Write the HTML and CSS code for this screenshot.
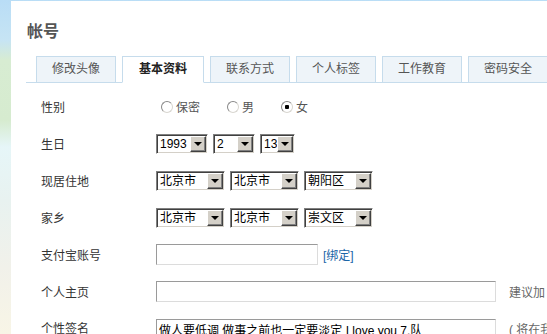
FILE: index.html
```html
<!DOCTYPE html>
<html lang="zh-CN">
<head>
    <meta charset="UTF-8">
    <meta name="viewport" content="width=device-width, initial-scale=1.0">
    <title>帐号 - 基本资料</title>
    <link rel="stylesheet" href="styles.css">
</head>
<body>

<!-- Panel principal -->
<div class="panel">
    <h2 class="title">帐号</h2>

    <!-- Pestañas -->
    <ul class="tabs">
        <li class="tab">修改头像</li>
        <li class="tab active">基本资料</li>
        <li class="tab">联系方式</li>
        <li class="tab">个人标签</li>
        <li class="tab">工作教育</li>
        <li class="tab">密码安全</li>
    </ul>

    <!-- Formulario -->
    <form class="profile">
        <div class="row">
            <label class="label">性别</label>
            <div class="controls">
                <label class="choice"><input type="radio" name="sex" class="radio">保密</label>
                <label class="choice"><input type="radio" name="sex" class="radio">男</label>
                <label class="choice"><input type="radio" name="sex" class="radio" checked>女</label>
            </div>
        </div>

        <div class="row">
            <label class="label">生日</label>
            <div class="controls">
                <span class="dropdown w-year"><select><option>1993</option></select><span class="arrow"></span></span>
                <span class="dropdown w-month"><select><option>2</option></select><span class="arrow"></span></span>
                <span class="dropdown w-day"><select><option>13</option></select><span class="arrow"></span></span>
            </div>
        </div>

        <div class="row">
            <label class="label">现居住地</label>
            <div class="controls">
                <span class="dropdown w-city"><select><option>北京市</option></select><span class="arrow"></span></span>
                <span class="dropdown w-city"><select><option>北京市</option></select><span class="arrow"></span></span>
                <span class="dropdown w-city"><select><option>朝阳区</option></select><span class="arrow"></span></span>
            </div>
        </div>

        <div class="row">
            <label class="label">家乡</label>
            <div class="controls">
                <span class="dropdown w-city"><select><option>北京市</option></select><span class="arrow"></span></span>
                <span class="dropdown w-city"><select><option>北京市</option></select><span class="arrow"></span></span>
                <span class="dropdown w-city"><select><option>崇文区</option></select><span class="arrow"></span></span>
            </div>
        </div>

        <div class="row">
            <label class="label">支付宝账号</label>
            <div class="controls">
                <input type="text" class="text short">
                <a class="bind-link">[绑定]</a>
            </div>
        </div>

        <div class="row">
            <label class="label">个人主页</label>
            <div class="controls">
                <input type="text" class="text long">
                <span class="hint">建议加</span>
            </div>
        </div>

        <div class="row top">
            <label class="label">个性签名</label>
            <div class="controls">
                <textarea class="text long sign">做人要低调 做事之前也一定要淡定 I love you 7.队</textarea>
                <span class="hint">( 将在我</span>
            </div>
        </div>
    </form>
</div>

</body>
</html>
```

FILE: styles.css
```css
body, html {
    height: 100%;
    margin: 0;
    overflow: hidden;
    font-family: "Liberation Sans", "Noto Sans CJK SC", sans-serif;
    font-size: 12px;
}

/* Fondo degradado que asoma a la izquierda */
body {
    background: linear-gradient(#b9ddf6 0%, #c6e4f4 12%, #d7ecd2 18%, #d6ebcf 36%, #e6f6f8 44%, #e8f2f0 60%, #f1f1ea 80%, #f8f5e6 100%);
}

.panel {
    margin: 1px 0 0 11px;
    height: 100%;
    background: #fff;
    padding: 19px 0 0 15px;
    white-space: nowrap;
}

.title {
    margin: 0 0 16px 1px;
    font-size: 16px;
    line-height: 20px;
    font-family: "Noto Sans CJK SC", sans-serif;
    font-weight: bold;
    color: #555;
}

/* Pestañas */
.tabs {
    display: flex;
    margin: 0;
    padding: 0 0 0 10px;
    list-style: none;
    border-bottom: 1px solid #c6dcec;
}

.tab {
    box-sizing: border-box;
    width: 80px;
    height: 27px;
    margin: 0 6px -1px 0;
    line-height: 25px;
    text-align: center;
    color: #555;
    background: #eef4f9;
    border: 1px solid #c6dcec;
    flex-shrink: 0;
}

.tab.active {
    width: 82px;
    background: #fff;
    border-bottom-color: #fff;
    color: #222;
    font-weight: bold;
}

/* Formulario */
.profile {
    padding: 5px 0 0 15px;
}

.row {
    display: flex;
    align-items: center;
    height: 37px;
}

.row.top {
    align-items: flex-start;
    padding-top: 9px;
}

.label {
    width: 115px;
    flex-shrink: 0;
    color: #333;
}

.controls {
    display: flex;
    align-items: center;
    gap: 5px;
}

.row.top .controls {
    align-items: flex-start;
}

.choice {
    display: flex;
    align-items: center;
    color: #555;
    margin-right: 17px;
}

.radio {
    appearance: none;
    width: 12px;
    height: 12px;
    margin: 0 3px 0 5px;
    border-radius: 50%;
    border: 1px solid #888;
    border-right-color: #d8d6d0;
    border-bottom-color: #d8d6d0;
    background: #fff;
}

.radio:checked {
    background: radial-gradient(circle, #000 0, #000 2px, #fff 2.5px);
}

/* Listas desplegables estilo clásico */
.dropdown {
    box-sizing: border-box;
    display: inline-flex;
    align-items: center;
    height: 20px;
    border: 1px solid;
    border-color: #808080 #fff #fff #808080;
    box-shadow: inset 1px 1px #404040, inset -1px -1px #d4d0c8;
    background: #fff;
    padding: 1px;
}

.dropdown select {
    appearance: none;
    flex: 1;
    min-width: 0;
    height: 100%;
    border: 0;
    padding: 0 0 0 2px;
    background: transparent;
    font: 12px "Liberation Sans", "Noto Sans CJK SC", sans-serif;
    color: #000;
    outline: none;
}

.arrow {
    box-sizing: border-box;
    display: flex;
    align-items: center;
    justify-content: center;
    width: 16px;
    height: 16px;
    background: #d4d0c8;
    border: 1px solid;
    border-color: #fff #404040 #404040 #fff;
    box-shadow: inset -1px -1px #808080;
}

.arrow:before {
    content: "";
    border-top: 4px solid #000;
    border-left: 4px solid transparent;
    border-right: 4px solid transparent;
}

.w-year { width: 52px; }
.w-month { width: 42px; }
.w-day { width: 35px; }
.w-city { width: 69px; }

/* Campos de texto */
.text {
    box-sizing: border-box;
    height: 21px;
    margin: 0;
    padding: 0 2px;
    border: 1px solid;
    border-color: #9a9a9a #dcdcdc #dcdcdc #9a9a9a;
    font: 12px "Liberation Sans", "Noto Sans CJK SC", sans-serif;
}

.short { width: 162px; }
.long { width: 340px; }

.sign {
    height: 40px;
    resize: none;
    padding-top: 1px;
    color: #000;
    overflow: hidden;
}

.bind-link {
    color: #1b66a8;
    cursor: pointer;
}

.hint {
    margin-left: 8px;
    color: #666;
}

.row.top .hint {
    margin-top: 1px;
}
```
